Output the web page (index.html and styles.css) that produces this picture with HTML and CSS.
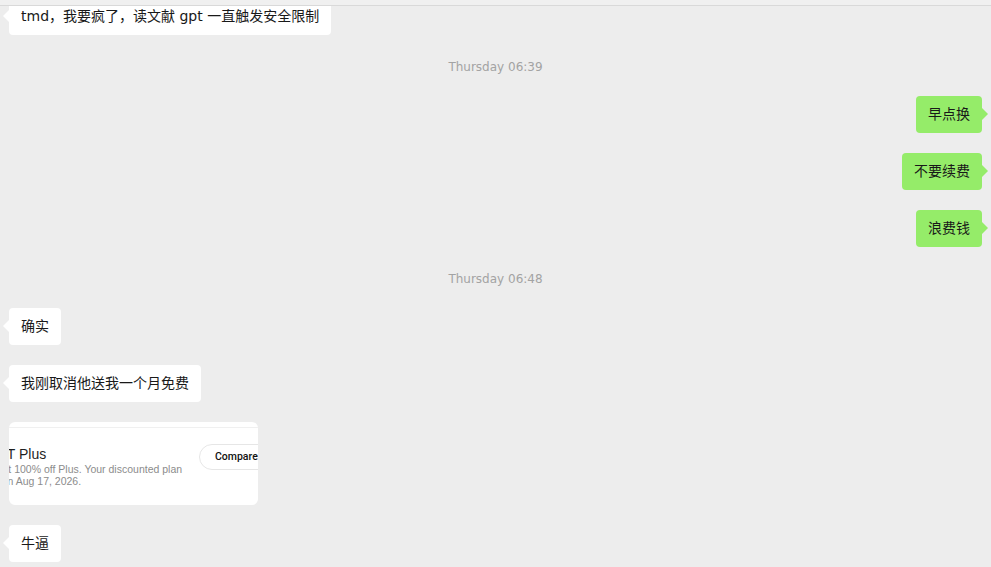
FILE: index.html
```html
<!DOCTYPE html>
<html lang="zh-CN">
<head>
    <meta charset="UTF-8">
    <meta name="viewport" content="width=device-width, initial-scale=1.0">
    <title>聊天</title>
    <link rel="stylesheet" href="styles.css">
</head>
<body>
    <div class="topbar"></div>
    <div class="chat">
        <div class="msg left">
            <div class="bubble">tmd，我要疯了，读文献 gpt 一直触发安全限制</div>
        </div>

        <div class="time">Thursday 06:39</div>

        <div class="msg right">
            <div class="bubble">早点换</div>
        </div>
        <div class="msg right">
            <div class="bubble">不要续费</div>
        </div>
        <div class="msg right">
            <div class="bubble">浪费钱</div>
        </div>

        <div class="time">Thursday 06:48</div>

        <div class="msg left">
            <div class="bubble">确实</div>
        </div>
        <div class="msg left">
            <div class="bubble">我刚取消他送我一个月免费</div>
        </div>
        <div class="msg left">
            <!-- 截图消息 -->
            <div class="card">
                <div class="shot">
                    <div class="shot-text">
                        <div class="shot-title">ChatGPT Plus</div>
                        <div class="shot-desc">You got 100% off Plus. Your discounted plan<br>ends on Aug 17, 2026.</div>
                    </div>
                    <div class="shot-btn">Compare plans</div>
                </div>
            </div>
        </div>
        <div class="msg left">
            <div class="bubble">牛逼</div>
        </div>
    </div>
</body>
</html>
```

FILE: styles.css
```css
html, body {
    margin: 0;
    height: 100%;
}

body {
    background-color: #ededed;
    font-family: "DejaVu Sans", "Noto Sans CJK SC", sans-serif;
    color: #191919;
    overflow: hidden;
}

.topbar {
    height: 5px;
    background-color: #f0f0f0;
    border-bottom: 1px solid #d9d9d9;
}

.chat {
    height: calc(100vh - 6px);
    overflow: hidden;
    display: flex;
    flex-direction: column;
    justify-content: flex-end;
    gap: 20px;
    padding: 0 9px 5px;
    box-sizing: border-box;
}

.time {
    flex-shrink: 0;
    height: 21px;
    padding-top: 4px;
    box-sizing: border-box;
    line-height: 17px;
    text-align: center;
    font-size: 12px;
    color: #a3a3a3;
}

.msg {
    flex-shrink: 0;
    display: flex;
}

.msg.right {
    justify-content: flex-end;
}

.bubble {
    position: relative;
    padding: 8px 12px;
    font-size: 14px;
    line-height: 21px;
    background-color: #ffffff;
    border-radius: 4px;
}

.bubble::before {
    content: "";
    position: absolute;
    top: 12px;
    border-top: 6px solid transparent;
    border-bottom: 6px solid transparent;
}

.left .bubble::before {
    left: -6px;
    border-right: 6px solid #ffffff;
}

.right .bubble {
    background-color: #95ec69;
}

.right .bubble::before {
    right: -6px;
    border-left: 6px solid #95ec69;
}

/* 图片消息 */
.card {
    width: 249px;
    height: 83px;
    background-color: #ffffff;
    border-radius: 6px;
    overflow: hidden;
}

.shot {
    display: flex;
    align-items: flex-start;
    width: 340px;
    height: 100px;
    margin: 5px 0 0 -34px;
    padding-top: 16px;
    box-sizing: border-box;
    border: 1px solid #f0f0f0;
    border-radius: 12px;
    font-family: "Liberation Sans", Arial, sans-serif;
}

.shot-text {
    width: 223px;
    flex-shrink: 0;
}

.shot-title {
    margin-top: 1px;
    margin-left: -19px;
    font-size: 14px;
    line-height: 18px;
    color: #1f1f1f;
}

.shot-desc {
    font-size: 10.5px;
    line-height: 12px;
    color: #8c8c8c;
    white-space: nowrap;
}

.shot-btn {
    flex-shrink: 0;
    height: 24px;
    line-height: 24px;
    padding: 0 14px 0 15px;
    border: 1px solid #e6e6e6;
    border-radius: 13px;
    font-family: Roboto, "Liberation Sans", sans-serif;
    font-size: 10.5px;
    font-weight: 500;
    color: #111111;
}
```
